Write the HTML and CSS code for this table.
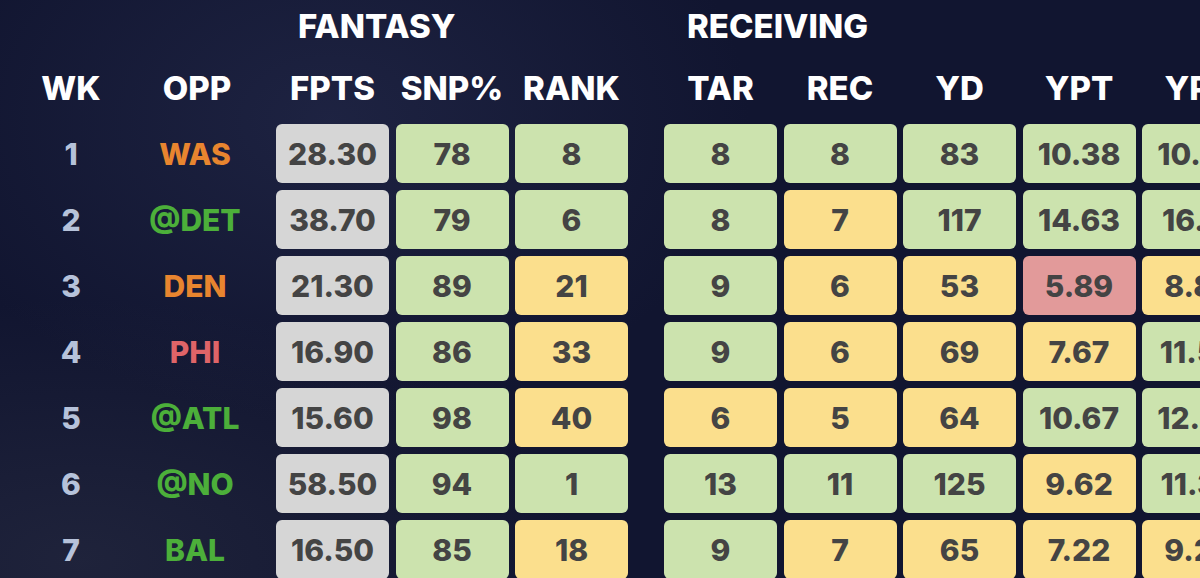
FILE: index.html
```html
<!DOCTYPE html>
<html>
<head>
<meta charset="utf-8">
<link rel="stylesheet" href="styles.css">
</head>
<body>
<div class="table">
  <div class="sp"></div><div class="sp"></div>
  <div class="sec sec-fantasy">FANTASY</div>
  <div class="sp"></div>
  <div class="sec sec-receiving">RECEIVING</div>
  <div class="sp"></div><div class="sp"></div>

  <div class="hd">WK</div><div class="hd">OPP</div>
  <div class="hd">FPTS</div><div class="hd">SNP%</div><div class="hd">RANK</div>
  <div class="sp"></div>
  <div class="hd">TAR</div><div class="hd">REC</div><div class="hd">YD</div><div class="hd">YPT</div><div class="hd">YPR</div>

  <div class="wk">1</div><div class="opp orange">WAS</div>
  <div class="c gray">28.30</div><div class="c grn">78</div><div class="c grn">8</div><div class="sp"></div>
  <div class="c grn">8</div><div class="c grn">8</div><div class="c grn">83</div><div class="c grn">10.38</div><div class="c grn">10.38</div>

  <div class="wk">2</div><div class="opp green">@DET</div>
  <div class="c gray">38.70</div><div class="c grn">79</div><div class="c grn">6</div><div class="sp"></div>
  <div class="c grn">8</div><div class="c yel">7</div><div class="c grn">117</div><div class="c grn">14.63</div><div class="c grn">16.71</div>

  <div class="wk">3</div><div class="opp orange">DEN</div>
  <div class="c gray">21.30</div><div class="c grn">89</div><div class="c yel">21</div><div class="sp"></div>
  <div class="c grn">9</div><div class="c yel">6</div><div class="c yel">53</div><div class="c red">5.89</div><div class="c yel">8.83</div>

  <div class="wk">4</div><div class="opp pink">PHI</div>
  <div class="c gray">16.90</div><div class="c grn">86</div><div class="c yel">33</div><div class="sp"></div>
  <div class="c grn">9</div><div class="c yel">6</div><div class="c yel">69</div><div class="c yel">7.67</div><div class="c grn">11.50</div>

  <div class="wk">5</div><div class="opp green">@ATL</div>
  <div class="c gray">15.60</div><div class="c grn">98</div><div class="c yel">40</div><div class="sp"></div>
  <div class="c yel">6</div><div class="c yel">5</div><div class="c yel">64</div><div class="c grn">10.67</div><div class="c grn">12.80</div>

  <div class="wk">6</div><div class="opp green">@NO</div>
  <div class="c gray">58.50</div><div class="c grn">94</div><div class="c grn">1</div><div class="sp"></div>
  <div class="c grn">13</div><div class="c grn">11</div><div class="c grn">125</div><div class="c yel">9.62</div><div class="c grn">11.36</div>

  <div class="wk">7</div><div class="opp green">BAL</div>
  <div class="c gray">16.50</div><div class="c grn">85</div><div class="c yel">18</div><div class="sp"></div>
  <div class="c grn">9</div><div class="c yel">7</div><div class="c yel">65</div><div class="c yel">7.22</div><div class="c yel">9.29</div>
</div>
</body>
</html>
```
FILE: styles.css
```css
html, body {
  margin: 0;
  padding: 0;
  width: 1200px;
  height: 578px;
  overflow: hidden;
}
body {
  background:
    radial-gradient(ellipse 420px 300px at 330px 120px, rgba(40,46,80,0.55), rgba(40,46,80,0) 100%),
    radial-gradient(ellipse 500px 260px at 80px 560px, rgba(40,44,66,0.6), rgba(40,44,66,0) 100%),
    #111530;
  font-family: "Inter", "Noto Sans", sans-serif;
  font-weight: 800;
}
.table {
  display: grid;
  grid-template-columns: 94px 145px 113px 113px 113px 23px 113px 113px 113px 113px 113px;
  grid-template-rows: 50px 60px repeat(7, 59px);
  column-gap: 6.5px;
  row-gap: 7px;
  padding-left: 24px;
  width: max-content;
}
.sec {
  color: #fff;
  font-size: 33px;
  align-self: center;
  padding-top: 2px;
  white-space: nowrap;
  grid-column: span 3;
}
.sec-fantasy {
  padding-left: 22px;
}
.sec-receiving {
  padding-left: 23px;
}
.hd {
  color: #fff;
  font-size: 33px;
  display: flex;
  align-items: center;
  justify-content: center;
  padding-top: 2px;
}
.wk {
  color: #b6c2da;
  font-size: 30px;
  display: flex;
  align-items: center;
  justify-content: center;
}
.opp {
  font-size: 30px;
  display: flex;
  align-items: center;
  justify-content: center;
  padding-right: 4px;
}
.orange { color: #e8852f; }
.green { color: #4caf3a; }
.pink { color: #df6468; }
.c {
  border-radius: 6px;
  display: flex;
  align-items: center;
  justify-content: center;
  font-size: 30px;
  color: #444444;
  white-space: nowrap;
  overflow: hidden;
}
.gray { background: #d6d6d6; }
.grn { background: #cce3ae; }
.yel { background: #fbdf8d; }
.red { background: #e29a9a; }
```
